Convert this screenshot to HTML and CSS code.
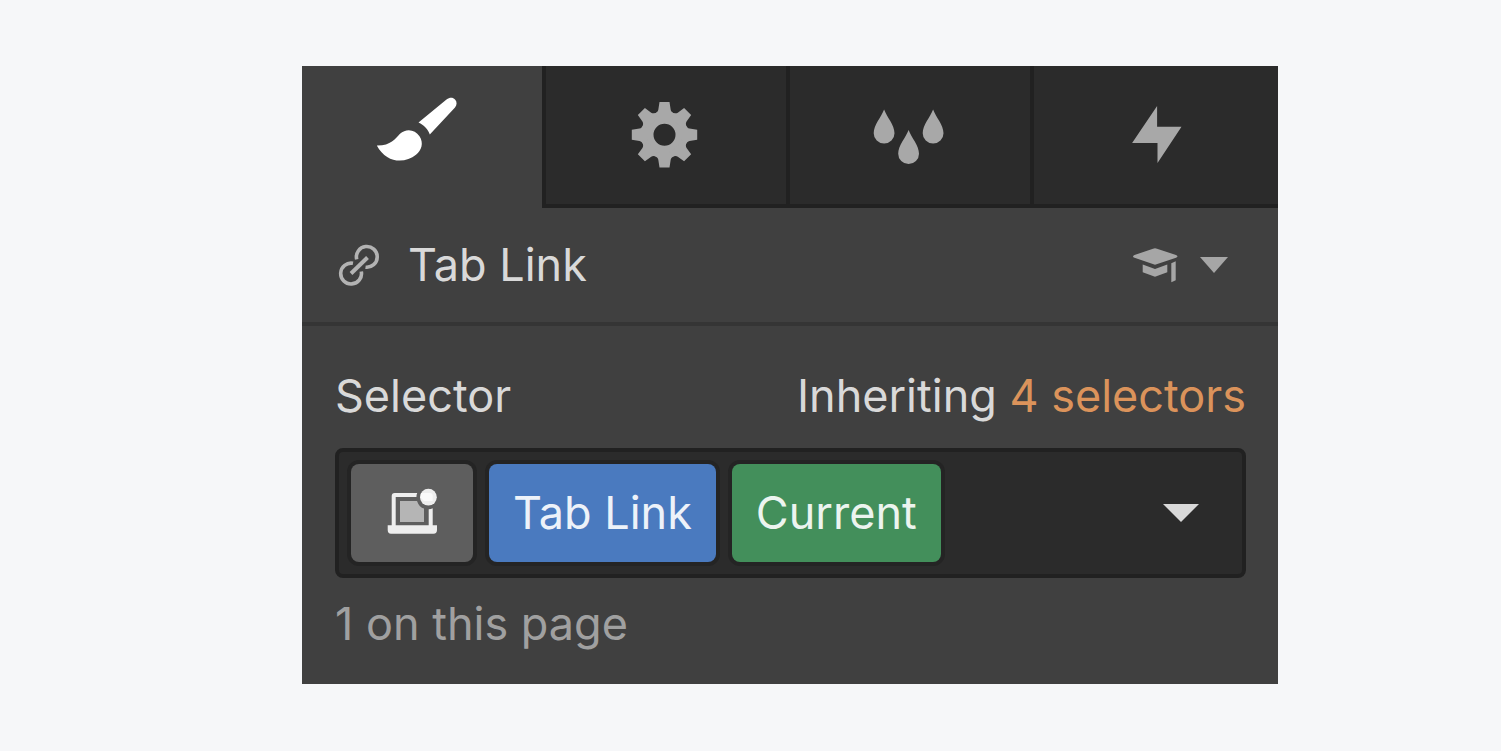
FILE: index.html
```html
<!DOCTYPE html>
<html lang="en">
<head>
<meta charset="UTF-8">
<meta name="viewport" content="width=device-width, initial-scale=1.0">
<title>Style panel</title>
<link rel="stylesheet" href="styles.css">
</head>
<body>
<main class="panel">
    <div class="tabs" role="tablist">
        <button class="tab active" role="tab" aria-selected="true" aria-label="Style">
            <svg width="96" height="80" viewBox="0 0 96 80" fill="currentColor">
                <path d="M44.5 27.5 L72.5 4.5 C76 2 79 2.5 81 4.5 C83.2 6.7 83 10 81 12.5 L55.8 39.5 C54 34 50 30 44.5 27.5 Z"/>
                <path d="M2.8 50.5 C17 50.7 21 43.7 26 38.7 C32 33.2 41 34.2 45.5 41.2 C50 48.2 47.5 55.2 42 59.7 C31 68.7 12.5 68.7 2.8 50.5 Z"/>
            </svg>
        </button>
        <button class="tab" role="tab" aria-label="Settings">
            <svg width="96" height="80" viewBox="0 0 96 80" fill="currentColor">
                <defs>
                    <path id="tooth" d="M-5 -32.7 H5 L6.2 -25 Q6.6 -22.5 10.5 -21 L5 -17 H-5 L-10.5 -21 Q-6.6 -22.5 -6.2 -25 Z"/>
                </defs>
                <g transform="translate(46.5 39.7)">
                    <circle r="16.8" fill="none" stroke="currentColor" stroke-width="11.6"/>
                    <use href="#tooth"/>
                    <use href="#tooth" transform="rotate(45)"/>
                    <use href="#tooth" transform="rotate(90)"/>
                    <use href="#tooth" transform="rotate(135)"/>
                    <use href="#tooth" transform="rotate(180)"/>
                    <use href="#tooth" transform="rotate(225)"/>
                    <use href="#tooth" transform="rotate(270)"/>
                    <use href="#tooth" transform="rotate(315)"/>
                </g>
            </svg>
        </button>
        <button class="tab" role="tab" aria-label="Style manager">
            <svg width="96" height="80" viewBox="0 0 96 80" fill="currentColor">
                <defs>
                    <path id="drop" d="M22.1 14.5 C24.8 22 32.5 30 32.5 38.2 A10.4 10.4 0 0 1 11.7 38.2 C11.7 30 19.3 22 22.1 14.5 Z"/>
                </defs>
                <use href="#drop"/>
                <use href="#drop" x="24.5" y="20.5"/>
                <use href="#drop" x="49"/>
            </svg>
        </button>
        <button class="tab" role="tab" aria-label="Interactions">
            <svg width="96" height="80" viewBox="0 0 96 80" fill="currentColor">
                <path d="M49.1 11 V31.7 H73.5 L49.5 68 V48 H24.1 Z"/>
            </svg>
        </button>
    </div>

    <header class="element">
        <svg class="link-icon" width="42" height="42" viewBox="0 0 42 42" fill="none" stroke="currentColor" stroke-width="3.6">
            <path d="M18.7 15.3 A10.4 10.4 0 1 1 27.5 23.2"/>
            <path d="M15 19.3 A10.4 10.4 0 1 0 23.3 27.5"/>
            <path d="M13 29.5 L29.5 13.5" stroke-width="4"/>
        </svg>
        <h1 class="element-name">Tab Link</h1>
        <button class="help" aria-label="Help">
            <svg width="46" height="36" viewBox="0 0 46 36" fill="currentColor">
                <path d="M0 9.5 Q0 8.5 1.5 8 L20 1.7 Q22 1 24 1.7 L43 8 Q44.5 8.5 44.5 9.5 Q44 10.5 43 10.8 L22 17.8 L1.5 10.8 Q0 10.3 0 9.5 Z"/>
                <path d="M9.7 17.5 L22 22 L34.3 17.5 V25.2 L22 29.8 L9.7 25.2 Z"/>
                <path d="M38.3 16.2 L42.7 14.2 V33.2 L38.3 35.2 Z"/>
            </svg>
            <svg width="28" height="16" viewBox="0 0 28 16" fill="currentColor">
                <path d="M0 0 H28 L14 16 Z"/>
            </svg>
        </button>
    </header>

    <section class="selector">
        <div class="selector-head">
            <h2 class="selector-title">Selector</h2>
            <p class="inherit">Inheriting <a href="#">4 selectors</a></p>
        </div>
        <div class="field">
            <button class="chip state" aria-label="Breakpoint">
                <svg width="52" height="50" viewBox="0 0 52 50" fill="#eeeeee">
                    <path d="M14 13 H31 Q33.5 20 38 20.5 V34 H14 Z" fill="#b5b5b5"/>
                    <path d="M5.7 37.3 V8 Q5.7 5 8.7 5 H31.2 Q30.3 7 30.5 9 H9.7 V37.3 H42.7 V21.2 Q45 21.2 46.7 20.3 V37.3 H51 V42 Q51 45.7 47.5 45.7 H5 Q1.7 45.7 1.7 42 V37.3 Z"/>
                    <circle cx="42.4" cy="9.2" r="8.4"/>
                    <path d="M35 5 H44 Q46.7 5 46.7 8 V13 H38 L34.5 9.5 Z" fill="#fafafa"/>
                </svg>
            </button>
            <button class="chip class-name">Tab Link</button>
            <button class="chip current">Current</button>
            <button class="open" aria-label="Show selectors">
                <svg width="36" height="18" viewBox="0 0 36 18" fill="currentColor">
                    <path d="M0 0 H36 L18 18 Z"/>
                </svg>
            </button>
        </div>
        <p class="count">1 on this page</p>
    </section>
</main>
</body>
</html>
```
FILE: styles.css
```css
* {
    box-sizing: border-box;
}
body {
    margin: 0;
    padding: 66px 223px 66px 302px;
    background-color: #f6f7f9;
    color: #d9d9d9;
    font-family: Inter, "Liberation Sans", sans-serif;
    font-size: 45px;
    line-height: 60px;
}
h1, h2, p {
    margin: 0;
    font-size: 45px;
    font-weight: 400;
}
button {
    padding: 0;
    border: none;
    background: none;
    color: inherit;
    font: inherit;
    cursor: pointer;
}
svg {
    display: block;
}
.panel {
    background-color: #404040;
}

/* Top tabs */
.tabs {
    display: flex;
}
.tab {
    width: 25%;
    display: flex;
    justify-content: center;
    align-items: center;
    height: 142px;
    border-right: 4px solid #212121;
    border-bottom: 4px solid #212121;
    background-color: #2b2b2b;
    color: #a8a8a8;
}
.tab:last-child {
    border-right: none;
}
.tab.active {
    padding-bottom: 4px;
    border-bottom: none;
    background-color: #404040;
    color: #ffffff;
}

/* Selected element */
.element {
    display: flex;
    align-items: center;
    height: 118px;
    padding: 0 50px 0 36px;
    border-bottom: 4px solid #353535;
}
.link-icon {
    margin-right: 28px;
    color: #b3b3b3;
}
.help {
    display: flex;
    align-items: center;
    gap: 21px;
    margin-left: auto;
    color: #a6a6a6;
}

/* Selector field */
.selector {
    padding: 40px 32px 30px 33px;
}
.selector-head {
    display: flex;
    justify-content: space-between;
    margin-bottom: 22px;
}
.inherit a {
    color: #db935b;
    text-decoration: none;
}
.field {
    display: flex;
    align-items: center;
    gap: 16px;
    padding: 12px;
    border: 4px solid #212121;
    border-radius: 8px;
    background-color: #2b2b2b;
}
.chip {
    height: 98px;
    padding: 0 24px;
    border-radius: 8px;
    box-shadow: 0 0 0 4px #242424;
}
.state {
    padding: 0 35px;
    background-color: #5e5e5e;
}
.class-name {
    background-color: #4a7abf;
    color: #edf2f9;
}
.current {
    background-color: #438f5b;
    color: #ecf4ef;
}
.open {
    margin-left: auto;
    padding: 20px 31px;
}
.count {
    margin-top: 16px;
    color: #a0a0a0;
}
```
